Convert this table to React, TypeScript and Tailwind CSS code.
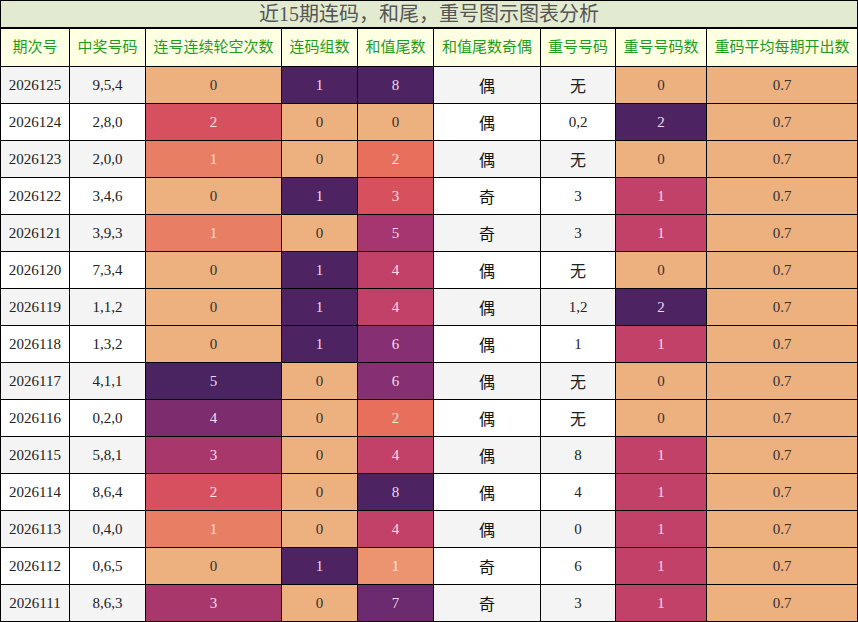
const rows: [string, string, number, number, number, string, string, number][] = [
  ['2026125', '9,5,4', 0, 1, 8, '偶', '无', 0],
  ['2026124', '2,8,0', 2, 0, 0, '偶', '0,2', 2],
  ['2026123', '2,0,0', 1, 0, 2, '偶', '无', 0],
  ['2026122', '3,4,6', 0, 1, 3, '奇', '3', 1],
  ['2026121', '3,9,3', 1, 0, 5, '奇', '3', 1],
  ['2026120', '7,3,4', 0, 1, 4, '偶', '无', 0],
  ['2026119', '1,1,2', 0, 1, 4, '偶', '1,2', 2],
  ['2026118', '1,3,2', 0, 1, 6, '偶', '1', 1],
  ['2026117', '4,1,1', 5, 0, 6, '偶', '无', 0],
  ['2026116', '0,2,0', 4, 0, 2, '偶', '无', 0],
  ['2026115', '5,8,1', 3, 0, 4, '偶', '8', 1],
  ['2026114', '8,6,4', 2, 0, 8, '偶', '4', 1],
  ['2026113', '0,4,0', 1, 0, 4, '偶', '0', 1],
  ['2026112', '0,6,5', 0, 1, 1, '奇', '6', 1],
  ['2026111', '8,6,3', 3, 0, 7, '奇', '3', 1],
];

const headers = ['期次号', '中奖号码', '连号连续轮空次数', '连码组数', '和值尾数', '和值尾数奇偶', '重号号码', '重号号码数', '重码平均每期开出数'];

const PEACH = 'bg-[#edb07f] text-[#333]';

// 连号连续轮空次数
const gapColor: Record<number, string> = {
  0: PEACH,
  1: 'bg-[#e87f65] text-[#fbe6dc]',
  2: 'bg-[#d6505f] text-[#fbe2e2]',
  3: 'bg-[#a8386c] text-[#f6dde6]',
  4: 'bg-[#7d2d6e] text-[#efdde9]',
  5: 'bg-[#4a2361] text-[#e9dcef]',
};

const pairColor: Record<number, string> = {
  0: PEACH,
  1: 'bg-[#4e2361] text-[#e9dcef]',
};

// 和值尾数
const tailColor: Record<number, string> = {
  0: PEACH,
  1: 'bg-[#ec9470] text-[#fdeee4]',
  2: 'bg-[#e76f5c] text-[#fce4dc]',
  3: 'bg-[#d6505e] text-[#fbe2e2]',
  4: 'bg-[#c24168] text-[#f8dde5]',
  5: 'bg-[#a5366f] text-[#f6dde6]',
  6: 'bg-[#862f72] text-[#efdde9]',
  7: 'bg-[#6b2a6d] text-[#ecdcea]',
  8: 'bg-[#4e2361] text-[#e9dcef]',
};

const repeatColor: Record<number, string> = {
  0: PEACH,
  1: 'bg-[#c24169] text-[#f8dde5]',
  2: 'bg-[#4e2361] text-[#e9dcef]',
};

const cell = 'flex items-center justify-center';

export default function App() {
  return (
    <div
      className="w-[858px] h-[622px] border border-black bg-black flex flex-col"
      style={{ fontFamily: '"Liberation Serif", "Noto Sans CJK SC", serif' }}
    >
      <div className="h-[28px] shrink-0 bg-[#e2ebd0] border-b-2 border-black flex items-center justify-center text-[20px] text-[#555] leading-none">
        近15期连码，和尾，重号图示图表分析
      </div>
      <div className="grid grid-cols-[68px_75px_135px_75px_75px_106px_74px_90px_150px] grid-rows-[37px] auto-rows-[36px] gap-px">
        {headers.map((h) => (
          <div key={h} className={`${cell} bg-[#ffffe3] text-[#1f9b1f] text-[15px]`}>
            {h}
          </div>
        ))}
        {rows.map((r, i) => {
          const base = i % 2 === 0 ? 'bg-[#f4f4f4]' : 'bg-white';
          return [
            <div key={`${i}a`} className={`${cell} ${base} text-[15px] text-[#222]`}>{r[0]}</div>,
            <div key={`${i}b`} className={`${cell} ${base} text-[15px] text-[#222]`}>{r[1]}</div>,
            <div key={`${i}c`} className={`${cell} ${gapColor[r[2]]} text-[15px]`}>{r[2]}</div>,
            <div key={`${i}d`} className={`${cell} ${pairColor[r[3]]} text-[15px]`}>{r[3]}</div>,
            <div key={`${i}e`} className={`${cell} ${tailColor[r[4]]} text-[15px]`}>{r[4]}</div>,
            <div key={`${i}f`} className={`${cell} ${base} text-[16px] text-[#111] pt-[3px]`}>{r[5]}</div>,
            <div
              key={`${i}g`}
              className={`${cell} ${base} text-[#222] ${r[6] === '无' ? 'text-[16px] pt-[3px]' : 'text-[15px]'}`}
            >
              {r[6]}
            </div>,
            <div key={`${i}h`} className={`${cell} ${repeatColor[r[7]]} text-[15px]`}>{r[7]}</div>,
            <div key={`${i}i`} className={`${cell} ${PEACH} text-[15px]`}>0.7</div>,
          ];
        })}
      </div>
    </div>
  );
}
